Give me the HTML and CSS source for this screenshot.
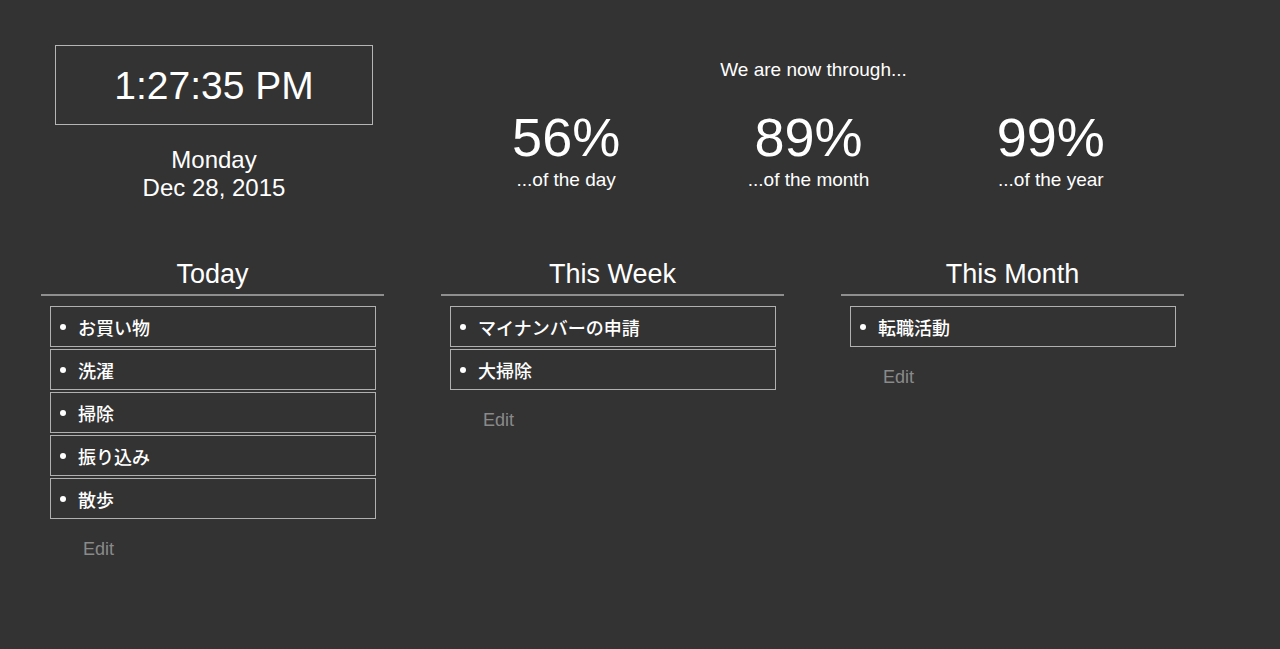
FILE: index.html
```html
<!DOCTYPE html>
<html lang="ja">
<head>
    <meta charset="UTF-8">
    <meta name="viewport" content="width=device-width, initial-scale=1.0"/>
    <title>Dashboard</title>
    <link rel="stylesheet" href="styles.css">
</head>
<body>
<div class="top">
    <div class="clock-col">
        <div class="clock">1:27:35 PM</div>
        <div class="date">Monday<br>Dec 28, 2015</div>
    </div>
    <div class="progress">
        <p class="through">We are now through...</p>
        <div class="stats">
            <div class="stat"><div class="pct">56%</div><div class="label">...of the day</div></div>
            <div class="stat"><div class="pct">89%</div><div class="label">...of the month</div></div>
            <div class="stat"><div class="pct">99%</div><div class="label">...of the year</div></div>
        </div>
    </div>
</div>

<div class="lists">
    <div class="list">
        <h2>Today</h2>
        <ul>
            <li>お買い物</li>
            <li>洗濯</li>
            <li>掃除</li>
            <li>振り込み</li>
            <li>散歩</li>
        </ul>
        <a class="edit" href="#">Edit</a>
    </div>
    <div class="list">
        <h2>This Week</h2>
        <ul>
            <li>マイナンバーの申請</li>
            <li>大掃除</li>
        </ul>
        <a class="edit" href="#">Edit</a>
    </div>
    <div class="list">
        <h2>This Month</h2>
        <ul>
            <li>転職活動</li>
        </ul>
        <a class="edit" href="#">Edit</a>
    </div>
</div>
</body>
</html>
```

FILE: styles.css
```css
body {
    margin: 0;
    background: #333333;
    color: #ffffff;
    font-family: "Liberation Sans", "Noto Sans CJK JP", sans-serif;
}

.top {
    display: flex;
    padding-top: 45px;
}

.clock-col {
    margin-left: 55px;
    width: 318px;
    text-align: center;
}

.clock {
    border: 1px solid #b5b5b5;
    height: 76px;
    padding-top: 2px;
    line-height: 76px;
    font-size: 39px;
}

.date {
    margin-top: 21px;
    font-size: 24px;
    line-height: 28px;
}

.progress {
    margin-left: 72px;
    width: 727px;
    text-align: center;
}

.through {
    margin: 14px 0 0 10px;
    font-size: 19px;
    line-height: 22px;
}

.stats {
    display: flex;
    margin-top: 26px;
}

.stat {
    flex: 1;
}

.pct {
    font-size: 54px;
    line-height: 60px;
}

.label {
    margin-top: 2px;
    font-size: 19px;
    line-height: 22px;
}

.lists {
    display: flex;
    gap: 57px;
    padding-left: 41px;
    margin-top: 51px;
}

.list {
    width: 343px;
}

h2 {
    margin: 0;
    padding: 5px 0 4px;
    font-size: 27px;
    font-weight: normal;
    line-height: 32px;
    text-align: center;
    border-bottom: 2px solid #8f8f8f;
}

ul {
    list-style: none;
    margin: 10px 8px 0 9px;
    padding: 0;
}

li {
    display: flex;
    align-items: center;
    height: 39px;
    margin-bottom: 2px;
    border: 1px solid #b0b0b0;
    font-family: "Noto Sans CJK JP", sans-serif;
    font-size: 18px;
    font-weight: 500;
}

li::before {
    content: "";
    width: 6px;
    height: 6px;
    margin: 0 12px 0 9px;
    border-radius: 50%;
    background: #ffffff;
}

.edit {
    display: inline-block;
    margin: 18px 0 0 42px;
    color: #8a8a8a;
    font-size: 18px;
    text-decoration: none;
}
```
